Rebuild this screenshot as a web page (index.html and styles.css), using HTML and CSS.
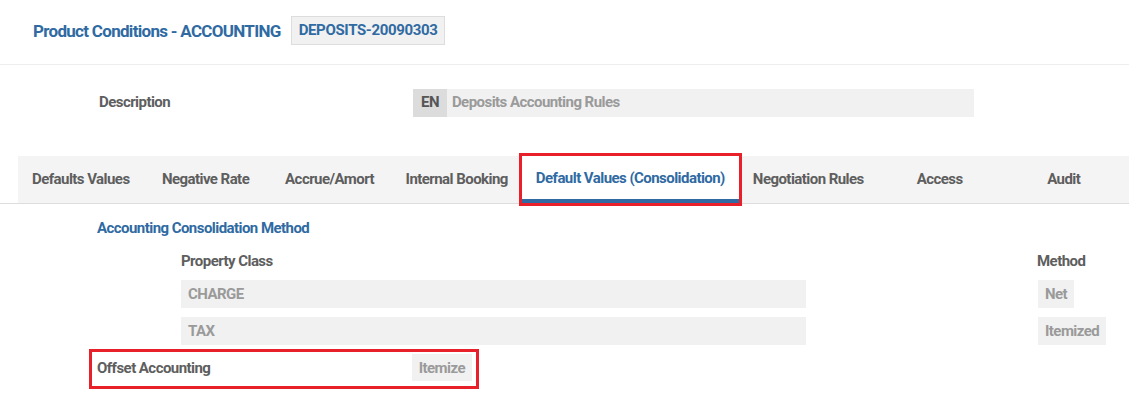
FILE: index.html
```html
<!DOCTYPE html>
<html>
<head>
    <meta charset="UTF-8">
    <title>Product Conditions - ACCOUNTING</title>
    <link rel="stylesheet" href="styles.css">
</head>
<body>
    <!-- Header -->
    <div class="header">
        <h1>Product Conditions - ACCOUNTING</h1>
        <span class="badge">DEPOSITS-20090303</span>
    </div>

    <!-- Description -->
    <div class="desc-row">
        <label class="desc-label">Description</label>
        <div class="desc-field">
            <span class="lang">EN</span>
            <span class="desc-value">Deposits Accounting Rules</span>
        </div>
    </div>

    <!-- Tabs -->
    <div class="tabs-line">
        <div class="tabs">
            <div class="tab">Defaults Values</div>
            <div class="tab">Negative Rate</div>
            <div class="tab">Accrue/Amort</div>
            <div class="tab">Internal Booking</div>
            <div class="tab active">Default Values (Consolidation)</div>
            <div class="tab">Negotiation Rules</div>
            <div class="tab">Access</div>
            <div class="tab">Audit</div>
        </div>
    </div>

    <!-- Tab content -->
    <div class="content">
        <h3 class="section-title">Accounting Consolidation Method</h3>
        <div class="grid">
            <div class="col-head">Property Class</div>
            <div class="col-head method-head">Method</div>
            <div class="cell wide">CHARGE</div>
            <div class="method"><span class="cell">Net</span></div>
            <div class="cell wide">TAX</div>
            <div class="method"><span class="cell">Itemized</span></div>
        </div>
        <div class="offset-row">
            <span class="offset-label">Offset Accounting</span>
            <span class="cell">Itemize</span>
        </div>
    </div>
</body>
</html>
```

FILE: styles.css
```css
body {
    margin: 0;
    font-family: Roboto, "Liberation Sans", sans-serif;
    font-weight: bold;
    font-size: 15px;
    letter-spacing: -0.55px;
    color: #5e5e5e;
    background: #fff;
}
.header {
    display: flex;
    align-items: center;
    gap: 10px;
    height: 61px;
    padding: 0 0 3px 33px;
    border-bottom: 1px solid #eeeeee;
}
.header h1 {
    margin: 0;
    font-size: 17px;
    letter-spacing: -0.7px;
    color: #2f6aa2;
}
.badge {
    line-height: 17px;
    padding: 5px 7px;
    background: #f1f1f1;
    border: 1px solid #dddddd;
    color: #2f6aa2;
    letter-spacing: -0.35px;
}
.desc-row {
    display: flex;
    align-items: center;
    padding: 24px 0 0 99px;
    height: 28px;
}
.desc-label {
    width: 314px;
    padding-bottom: 3px;
}
.desc-field {
    display: flex;
    width: 561px;
    height: 28px;
    background: #f1f1f1;
}
.lang {
    display: flex;
    align-items: center;
    padding: 0 8px 3px 8px;
    background: #dcdcdc;
    color: #555;
}
.desc-value {
    display: flex;
    align-items: center;
    padding: 0 0 3px 5px;
    color: #9a9a9a;
}
.tabs-line {
    margin-top: 39px;
    border-bottom: 1px solid #dddddd;
}
.tabs {
    display: flex;
    margin-left: 18px;
    background: #f4f4f4;
}
.tab {
    min-width: 124px;
    padding: 0 14px;
    box-sizing: border-box;
    height: 47px;
    line-height: 46px;
    text-align: center;
    white-space: nowrap;
}
.tab.active {
    background: #fff;
    color: #2f6aa2;
    border-bottom: 4px solid #2f6aa2;
    outline: 3px solid #e8202a;
    line-height: 44px;
}
.content {
    padding: 15px 22px 0 97px;
}
.section-title {
    margin: 0;
    font-size: 15px;
    color: #2f6aa2;
}
.grid {
    display: grid;
    grid-template-columns: 625px 1fr;
    row-gap: 9px;
    margin: 15px 0 0 84px;
}
.col-head {
    height: 19px;
}
.method-head {
    padding-left: 231px;
}
.cell {
    display: inline-flex;
    align-items: center;
    height: 28px;
    padding: 0 7px;
    box-sizing: border-box;
    background: #f1f1f1;
    color: #9a9a9a;
}
.wide {
    display: flex;
}
.method {
    padding-left: 232px;
}
.offset-row {
    display: flex;
    align-items: center;
    justify-content: space-between;
    box-sizing: border-box;
    width: 390px;
    margin: 4px 0 0 -8px;
    padding: 2px 4px 5px 5px;
    border: 3px solid #e8202a;
}
.offset-row .cell {
    height: 27px;
}
```
